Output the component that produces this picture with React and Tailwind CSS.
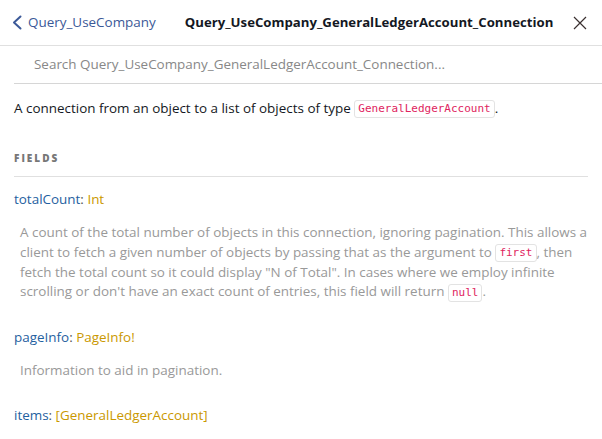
import React from 'react';

// inline code chip, like the ones in the doc explorer
const Code = ({ children }) => (
  <code className="inline-block rounded-[3px] border border-[#e3e3e3] px-[3px] align-middle font-['DejaVu_Sans_Mono','Liberation_Mono',monospace] text-[11px] leading-[16px] text-[#e0245e]">
    {children}
  </code>
);

const FieldItem = ({ name, type, children }) => (
  <div>
    <div className="leading-5">
      <span className="text-[#1f61a0]">{name}</span>
      <span className="text-[#555]">: </span>
      <span className="text-[#ca9800]">{type}</span>
    </div>
    {children}
  </div>
);

const App = () => {
  return (
    <div className="h-[439px] w-[602px] overflow-hidden bg-white font-['Open_Sans',sans-serif] text-[13.45px] text-[#141823]">
      {/* title bar */}
      <div className="flex h-[46px] items-center border-b border-[#e0e0e0] pl-[12px] pr-[15px]">
        <button className="flex items-center gap-[6px] text-[#3b5998]">
          <svg width="10" height="15" viewBox="0 0 10 15" fill="none">
            <path d="M8.5 1.5L2 7.5L8.5 13.5" stroke="currentColor" strokeWidth="2" strokeLinecap="round" strokeLinejoin="round" />
          </svg>
          <span>Query_UseCompany</span>
        </button>
        <div className="ml-[29px] flex-1 whitespace-nowrap text-[13.2px] font-bold">Query_UseCompany_GeneralLedgerAccount_Connection</div>
        <svg width="14" height="14" viewBox="0 0 14 14" fill="none" className="text-[#3a3030]">
          <path d="M1 1L13 13M13 1L1 13" stroke="currentColor" strokeWidth="1.2" />
        </svg>
      </div>

      {/* search */}
      <div className="ml-[14px] flex h-[38px] items-center border-b border-[#d6d6d6] pl-[20px] text-[#888]">
        Search Query_UseCompany_GeneralLedgerAccount_Connection...
      </div>

      <div className="px-[14px]">
        <p className="mt-[14px] leading-5">
          A connection from an object to a list of objects of type <Code>GeneralLedgerAccount</Code>.
        </p>

        <div className="mt-[33px] border-b border-[#e0e0e0] pb-[11px] text-[10px] font-black leading-[14px] tracking-[2px] text-[#777]">
          FIELDS
        </div>

        <div className="mt-[12px] space-y-[25px]">
          <FieldItem name="totalCount" type="Int">
            <p className="ml-[6px] mt-[14px] whitespace-nowrap leading-[19.6px] text-[#999]">
              A count of the total number of objects in this connection, ignoring pagination. This allows a<br />
              client to fetch a given number of objects by passing that as the argument to <Code>first</Code>, then<br />
              fetch the total count so it could display "N of Total". In cases where we employ infinite<br />
              scrolling or don't have an exact count of entries, this field will return <Code>null</Code>.
            </p>
          </FieldItem>

          <FieldItem name="pageInfo" type="PageInfo!">
            <p className="ml-[6px] mt-[14px] leading-[19.6px] text-[#999]">Information to aid in pagination.</p>
          </FieldItem>

          <FieldItem name="items" type="[GeneralLedgerAccount]" />
        </div>
      </div>
    </div>
  );
};

export default App;
